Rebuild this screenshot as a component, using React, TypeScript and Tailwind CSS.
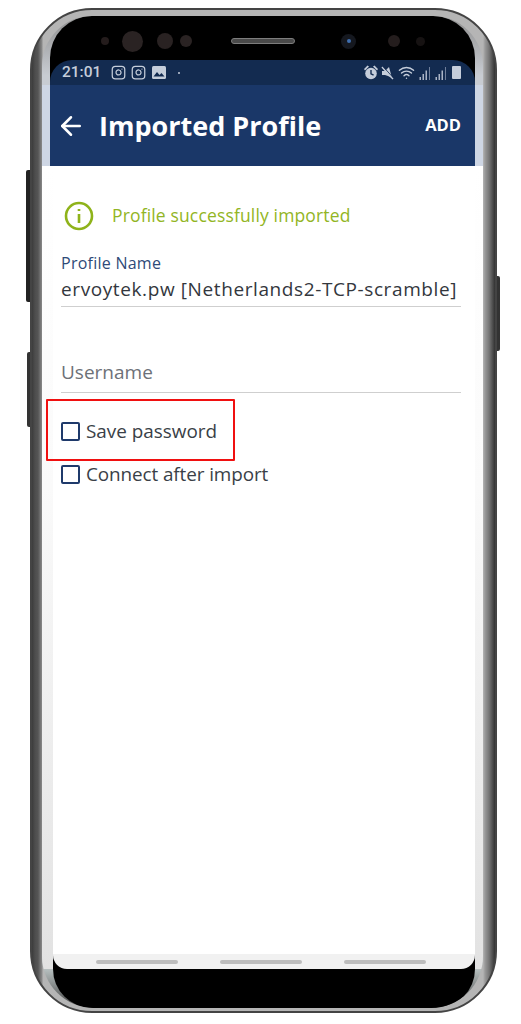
import { ArrowLeft, Instagram, Wifi } from "lucide-react"

const glassEdge = "bg-[linear-gradient(to_bottom,#ffffff_0%,#fafafa_40%,#ececec_75%,#e2e2e2_100%)]"

function SignalBars() {
  return (
    <svg width="13" height="14" viewBox="0 0 13 14">
      <rect x="0.5" y="11" width="1.5" height="3" fill="#aab4c6" />
      <rect x="3.5" y="8" width="1.5" height="6" fill="#aab4c6" />
      <rect x="6.5" y="4.5" width="1.5" height="9.5" fill="#aab4c6" />
      <rect x="10" y="1" width="1" height="13" fill="#6f7f9b" />
    </svg>
  )
}

function PictureIcon() {
  return (
    <svg width="14" height="13" viewBox="0 0 14 13">
      <rect width="14" height="13" rx="1.5" fill="#c5cdda" />
      <path d="M1.5 10.5l3.5-4.5 2.500 3 2-2 3 3.500z" fill="#132b50" />
    </svg>
  )
}

function AlarmIcon() {
  return (
    <svg width="14" height="15" viewBox="0 0 14 15" fill="#c5cdda">
      <circle cx="7" cy="8.500" r="5.800" />
      <path d="M0 4l3.500-3.500 1.500 1L1 5.500zM14 4L10.500.5 9 1.500l4 4z" />
      <path d="M7 5v3.800l2.600 1.400" fill="none" stroke="#132b50" strokeWidth="1.400" />
    </svg>
  )
}

function MuteIcon() {
  return (
    <svg width="13" height="14" viewBox="0 0 13 14" fill="#c5cdda">
      <path d="M1 5h3l4-4 3 11-4-2-3-1H1z" />
      <path d="M1 1l11 12" stroke="#c5cdda" strokeWidth="1.600" />
      <path d="M2 0.500l11 12" stroke="#132b50" strokeWidth="0.800" />
    </svg>
  )
}

function Sensors() {
  return (
    <div className="h-[44px] shrink-0 mx-[8px] bg-black rounded-t-[42px] flex items-center pt-[6px] pl-[51px]">
      <div className="w-[8px] h-[8px] rounded-full bg-[#241c1c]" />
      <div className="ml-[13px] w-[21px] h-[21px] rounded-full bg-[#2a2323]" />
      <div className="ml-[14px] w-[16px] h-[16px] rounded-full bg-[#292222]" />
      <div className="ml-[7px] w-[12px] h-[12px] rounded-full bg-[#2a2323]" />
      <div className="ml-[39px] w-[64px] h-[6px] rounded-full bg-[#4a4a4a] border border-[#7d7d7d]" />
      <div className="ml-[46px] w-[15px] h-[15px] rounded-full bg-[#15181f] flex items-center justify-center">
        <div className="w-[4px] h-[4px] rounded-full bg-[#3f6fb0]" />
      </div>
      <div className="ml-[32px] w-[12px] h-[12px] rounded-full bg-[#241d1d]" />
      <div className="ml-[16px] w-[9px] h-[9px] rounded-full bg-[#161212]" />
    </div>
  )
}

function StatusBar() {
  return (
    <div className="shrink-0 bg-black">
      <div className="h-[25px] bg-[#132b50] rounded-t-[22px] flex items-center pl-[12px] pr-[14px] text-[#c5cdda]">
        <span className="text-[15.5px] font-medium font-['Roboto',sans-serif] leading-none">21:01</span>
        <Instagram size={15} className="ml-[10px]" />
        <Instagram size={15} className="ml-[5px]" />
        <div className="ml-[6px]">
          <PictureIcon />
        </div>
        <span className="ml-[12px] w-[2px] h-[2px] rounded-full bg-[#c5cdda]" />
        <div className="ml-auto flex items-center">
          <AlarmIcon />
          <div className="ml-[3px]">
            <MuteIcon />
          </div>
          <Wifi size={17} className="ml-[4px]" />
          <div className="ml-[4px]">
            <SignalBars />
          </div>
          <div className="ml-[3px]">
            <SignalBars />
          </div>
          <div className="ml-[4px] w-[9px] h-[13px] bg-[#c5cdda] rounded-[1px]" />
        </div>
      </div>
    </div>
  )
}

function Checkbox({ label, className }: { label: string; className?: string }) {
  return (
    <div className="flex items-center gap-[6px]">
      <div className="w-[19px] h-[19px] rounded-[2px] border-2 border-[#1f3a6b]" />
      <span className={`text-[18.9px] text-[#3a3f47] leading-none ${className ?? ""}`}>{label}</span>
    </div>
  )
}

function SideStrip() {
  return (
    <div className="w-[8px] shrink-0 flex flex-col">
      <div className="h-[25px] shrink-0" />
      <div className="h-[81px] shrink-0 bg-[#ced6e4]" />
      <div className={`flex-1 ${glassEdge}`} />
    </div>
  )
}

export default function App() {
  return (
    <div className="relative w-[521px] h-[1024px] bg-white pt-[8px] pl-[30px] font-['Open_Sans',sans-serif]">
      {/* side buttons */}
      <div className="absolute left-[26px] top-[170px] w-[4px] h-[132px] bg-[#222] rounded-l-[2px]" />
      <div className="absolute left-[27px] top-[352px] w-[3px] h-[75px] bg-[#333] rounded-l-[2px]" />
      <div className="absolute left-[497px] top-[276px] w-[3px] h-[75px] bg-[#333] rounded-r-[2px]" />

      {/* phone body */}
      <div className="w-[467px] h-[1005px] rounded-[62px] border-2 border-[#444] bg-[linear-gradient(to_right,#3c3c3c_0px,#4d4d4d_3px,#555_6px,#8a8a8a_10px,#b5b5b5_11px,#b5b5b5_451px,#999_453px,#777_457px,#555_460px,#333_463px)] pt-[6px] pl-[10px]">
        <div className="w-[441px] h-[992px] rounded-t-[50px] rounded-b-[52px] bg-[linear-gradient(to_bottom,#8f8f8f_0%,#c8ccd2_6%,#c8ccd2_92%,#b9c2c2_96%,#444_100%)] overflow-hidden flex flex-col">
          <Sensors />

          {/* display, with curved glass strips either side */}
          <div className="h-[909px] shrink-0 flex">
            <SideStrip />

            <div className="w-[425px] shrink-0 flex flex-col bg-white">
              <StatusBar />
              <div className="h-[81px] shrink-0 bg-[#1a3768] flex items-center pl-[6px] pr-[14px] text-white">
                <ArrowLeft size={30} strokeWidth={2} />
                <span className="ml-[13px] text-[27px] font-bold leading-none">Imported Profile</span>
                <span className="ml-auto text-[16.5px] font-bold leading-none">ADD</span>
              </div>

              <div className="flex-1 flex">
                <div className={`w-[3px] shrink-0 ${glassEdge}`} />
                <div className="flex-1 flex flex-col">
                  <div className="flex-1 pl-[8px] pr-[14px]">
                    <div className="mt-[35px] h-[30px] flex items-center pl-[3px]">
                      <svg width="30" height="30" viewBox="0 0 30 30" fill="none" stroke="#8fb31a" strokeWidth="2.6">
                        <circle cx="15" cy="15" r="13" />
                        <path d="M15 13v9" />
                        <path d="M15 8v2" />
                      </svg>
                      <span className="ml-[18px] -mt-[1px] text-[17.5px] tracking-[0.15px] text-[#92b524] leading-none">
                        Profile successfully imported
                      </span>
                    </div>

                    <div className="mt-[22px] text-[16px] tracking-[0.25px] leading-[20px] text-[#2f4a78]">Profile Name</div>
                    <div className="mt-[5px] h-[29px] border-b-[1.5px] border-[#cfcfcf] text-[19px] tracking-[0.6px] leading-[22px] text-[#33373d] whitespace-nowrap">
                      ervoytek.pw [Netherlands2-TCP-scramble]
                    </div>

                    <div className="mt-[52px] h-[34px] border-b-[1.5px] border-[#cfcfcf] text-[19px] leading-[26px] text-[#6d7178]">
                      Username
                    </div>

                    <div className="mt-[6px] -ml-[15px] w-[189px] h-[62px] border-2 border-[#f01010] rounded-[1px] flex items-center pl-[13px] pt-[2px]">
                      <Checkbox label="Save password" />
                    </div>
                    <div className="mt-[4px]">
                      <Checkbox label="Connect after import" className="tracking-[-0.1px]" />
                    </div>
                  </div>

                  <div className="shrink-0 bg-black">
                    <div className="h-[15px] bg-[#f1f1f1] rounded-b-[14px] flex items-start pt-[6px] pl-[43px] gap-[42px]">
                      <div className="w-[82px] h-[4px] rounded-full bg-[#bdbdbd]" />
                      <div className="w-[82px] h-[4px] rounded-full bg-[#bdbdbd]" />
                      <div className="w-[82px] h-[4px] rounded-full bg-[#bdbdbd]" />
                    </div>
                  </div>
                </div>
              </div>
            </div>

            <SideStrip />
          </div>

          <div className="flex-1 ml-[11px] mr-[8px] bg-black rounded-b-[40px]" />
        </div>
      </div>
    </div>
  )
}
